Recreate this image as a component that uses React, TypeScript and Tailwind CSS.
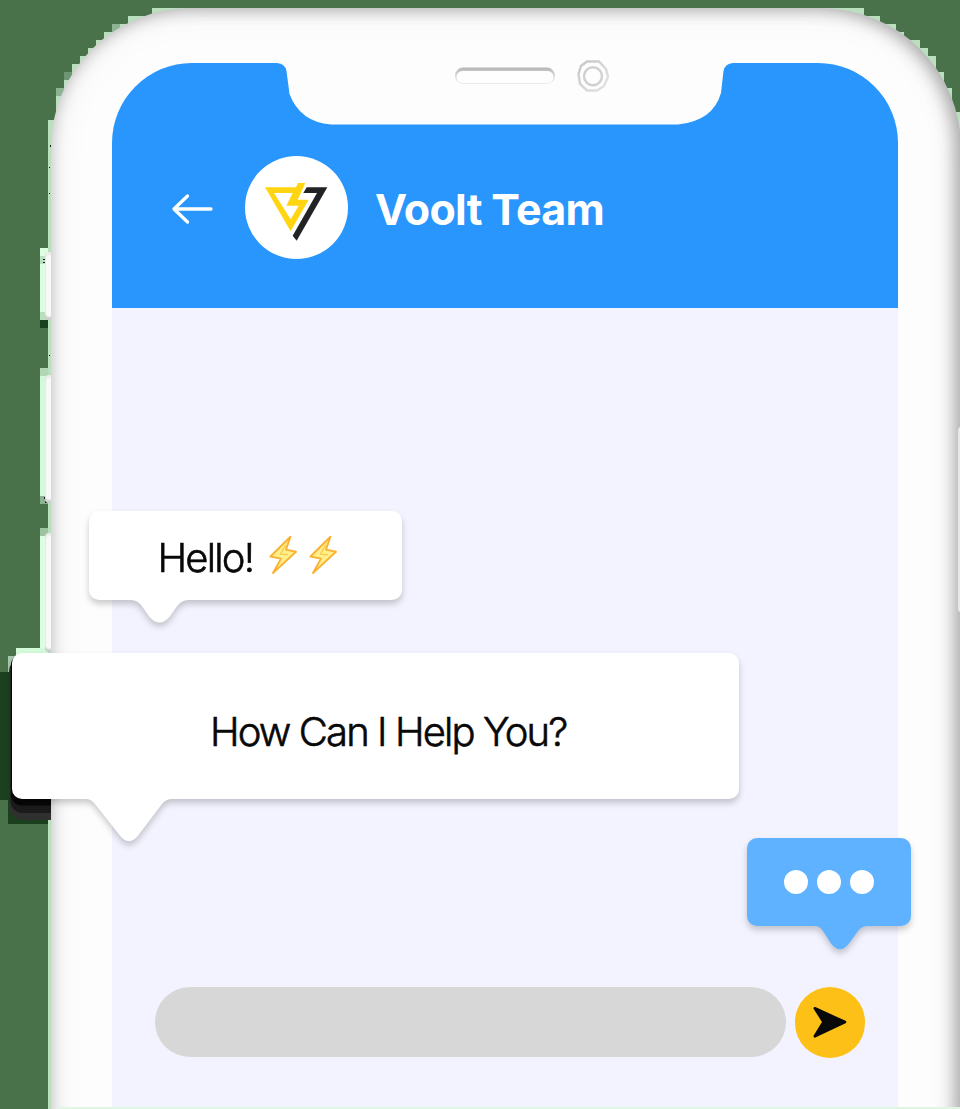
import React from "react";

type Block = [x: number, y: number, w: number, h: number, fill?: string];

const HALO = "#b9dfbd";
const EDGE: Block[] = [
  [152, 8, 712, 8], [128, 16, 752, 8], [120, 24, 776, 8], [112, 24, 8, 8, "#8db391"],
  [104, 32, 800, 8], [96, 40, 824, 8], [88, 48, 840, 8], [80, 56, 856, 8], [72, 64, 864, 8],
  [72, 72, 872, 8], [64, 72, 8, 8, "#6f9672"], [64, 80, 880, 8], [64, 88, 888, 8], [56, 88, 8, 8, "#8db391"],
  [56, 96, 896, 16], [56, 112, 904, 8], [48, 120, 912, 989],
  [40, 248, 8, 72, "#dcffe2"], [40, 256, 8, 8, "#b9dfbd"], [40, 312, 8, 8, "#b9dfbd"], [40, 320, 8, 8, "#1b401d"],
  [40, 368, 8, 8, "#b0d6b4"], [40, 376, 8, 120, "#d3fbd9"], [40, 496, 8, 8, "#8db391"],
  [40, 528, 8, 8, "#9bc49f"], [40, 536, 8, 120, "#dcffe2"],
  [16, 648, 32, 8, "#d3fbd9"], [8, 656, 16, 16, "#a9c8ad"],
  [0, 672, 16, 128, "#1b401d"], [8, 800, 40, 24, "#1b401d"],
];

const SPECKS: Block[] = [
  [43, 259, 2, 1], [43, 262, 2, 1], [49, 355, 1, 1], [44, 497, 1, 2], [45, 501, 2, 2],
  [52, 133, 1, 1], [50, 145, 1, 2], [49, 167, 1, 1], [49, 193, 1, 1], [58, 105, 1, 1], [57, 109, 1, 1],
];

function Backdrop() {
  return (
    <svg className="absolute inset-0" width="960" height="1109" shapeRendering="crispEdges" aria-hidden="true">
      {EDGE.map(([x, y, w, h, fill], i) => (
        <rect key={i} x={x} y={y} width={w} height={h} fill={fill ?? HALO} />
      ))}
      {SPECKS.map(([x, y, w, h], i) => (
        <rect key={i} x={x} y={y} width={w} height={h} fill="#1c1c1c" />
      ))}
      <g shapeRendering="auto">
        <rect x="9" y="658" width="60" height="162" rx="14" fill="#303030" />
        <rect x="10.5" y="656" width="60" height="157" rx="12" fill="#1b1b1b" />
        <rect x="11" y="654" width="60" height="151.5" rx="11" fill="#070707" />
      </g>
    </svg>
  );
}

function SideButton({ className }: { className: string }) {
  return (
    <div className={`absolute left-[45px] w-[8px] rounded-l-[4px] bg-[#f9f9f9] shadow-[inset_0_-3px_2px_rgba(0,0,0,0.18),inset_0_3px_2px_rgba(0,0,0,0.06)] ${className}`} />
  );
}

function Notch() {
  return (
    <div className="absolute left-[164px] top-[-7px]">
      <svg width="458" height="70" viewBox="276 56 458 70" aria-hidden="true">
        <path
          d="M276 56V63H277Q285 63.500 286.500 71L289.500 94Q300 122 331 124.500H678Q713 121 721 93L723.500 71Q725 63.500 733 63H734V56Z"
          fill="#fdfdfd"
        />
        <defs>
          <linearGradient id="slot" x1="0" y1="0" x2="0" y2="1">
            <stop offset="0" stopColor="#b5b5b5" />
            <stop offset="0.45" stopColor="#d5d5d5" />
            <stop offset="1" stopColor="#ececec" />
          </linearGradient>
          <linearGradient id="ring" x1="0" y1="0" x2="1" y2="1">
            <stop offset="0" stopColor="#c6c6c6" />
            <stop offset="1" stopColor="#e4e4e4" />
          </linearGradient>
        </defs>
        <rect x="455" y="67.5" width="100" height="16.500" rx="8.200" fill="url(#slot)" />
        <rect x="456.500" y="71" width="97" height="12" rx="6" fill="#fefefe" />
        <path d="M587 61.500H599L606 69L608 77L604 86L597 90.500H587L580 84L578.500 74L581 66Z" fill="#fdfdfd" stroke="url(#ring)" strokeWidth="2.400" />
        <circle cx="593" cy="76.300" r="9" fill="#fdfdfd" stroke="#d0d0d0" strokeWidth="2.400" />
      </svg>
    </div>
  );
}

function Header() {
  return (
    <header className="relative flex h-[245px] shrink-0 items-start rounded-t-[80px] bg-[#2896fc] pl-[59px] pt-[93px]">
      <Notch />
      <svg className="mt-[36px]" width="43" height="34" viewBox="0 0 43 34" fill="none" stroke="white" strokeWidth="3.300" strokeLinecap="round" strokeLinejoin="round" aria-label="Back">
        <path d="M40 17H3M16.500 4L3 17L16.500 30" />
      </svg>
      <div className="ml-[31px] size-[102.500px] rounded-full bg-white">
        <svg width="103" height="103" viewBox="256 48 309 309" aria-hidden="true">
          <path fillRule="evenodd" fill="#ffd512" d="M316 142H409L415 129H437L414 179H447L393 274ZM343 159L393 238L417 197H380L399 159Z" />
          <path fill="#222326" d="M441 142H503L411 302L399 287L472 159H431Z" />
        </svg>
      </div>
      <h1 className="ml-[27.500px] mt-[26px] whitespace-nowrap text-[43px] font-bold leading-[54px] tracking-[-0.700px] text-white">Voolt Team</h1>
    </header>
  );
}

function Bolt() {
  return (
    <svg width="28" height="40" viewBox="0 0 28 40" aria-hidden="true">
      <path d="M21.400 1.800L1.500 21.500L12 23.600L4 38L27 16.800L17 14.600Z" fill="#fff08c" stroke="#f9b233" strokeWidth="1.900" strokeLinejoin="round" />
      <path d="M16.500 10L11.500 19.200L19 19.600" fill="none" stroke="#fcc94a" strokeWidth="1.300" />
    </svg>
  );
}

export default function App() {
  return (
    <div className="relative h-[1109px] w-[960px] overflow-hidden bg-[#49724b] font-['Inter',sans-serif]">
      <Backdrop />
      <SideButton className="top-[252px] h-[68px]" />
      <SideButton className="top-[375px] h-[128px]" />
      <SideButton className="top-[533px] h-[119px]" />
      <main className="relative ml-[51px] mt-[8px] h-[1250px] w-[910px] rounded-[140px] bg-[#fdfdfd] pl-[61px] pt-[55px] shadow-[inset_0_0_18px_rgba(0,0,0,0.16),inset_0_0_42px_rgba(0,0,0,0.06),inset_-7px_0_18px_rgba(0,0,0,0.24)]">
        <div className="flex h-[1044px] w-[786px] flex-col rounded-t-[80px] bg-[#f3f3ff]">
          <Header />

          <div className="relative ml-[-23px] mt-[203px] flex h-[89px] w-[313px] shrink-0 items-start rounded-[10px] bg-white pl-[68.500px] pt-[22px] drop-shadow-[0_4px_3px_rgba(0,0,0,0.2)]">
            <p className="whitespace-nowrap text-[40px] font-light leading-[50px] tracking-[-1.800px] text-[#080808] [-webkit-text-stroke:0.6px_#080808]">Hello!</p>
            <span className="absolute left-[179.500px] top-[24px] flex gap-[12px]">
              <Bolt />
              <Bolt />
            </span>
            <svg className="absolute left-[42px] top-[88px]" width="60" height="26" viewBox="131.500 599 60 26" aria-hidden="true">
              <path d="M131.500 599V600Q138.500 600 143 607L150 617Q160 628 170 617L177 607Q181.500 600 189 600V599Z" fill="white" />
            </svg>
          </div>

          <div className="relative ml-[-100px] mt-[53px] flex h-[146px] w-[726.500px] shrink-0 items-start rounded-[10px] bg-white pl-[198px] pt-[54px] drop-shadow-[0_4px_3px_rgba(0,0,0,0.2)]">
            <p className="whitespace-nowrap text-[40px] font-light leading-[50px] tracking-[-1.900px] text-[#080808] [-webkit-text-stroke:0.6px_#080808]">How Can I Help You?</p>
            <svg className="absolute left-[74px] top-[145px]" width="88" height="46" viewBox="86 798 88 46" aria-hidden="true">
              <path d="M86 798V799Q91 799 95 804L119.500 835Q129 847.500 138.500 835L162 804Q166 799 172 799V798Z" fill="white" />
            </svg>
          </div>

          <div className="relative mr-[-13px] mt-[38.500px] flex h-[88.500px] w-[164px] shrink-0 items-center justify-center gap-[9.500px] self-end rounded-[10px] bg-[#5fb2ff] drop-shadow-[0_4px_3px_rgba(0,0,0,0.2)]">
            <i className="size-[23.500px] rounded-full bg-white" />
            <i className="size-[23.500px] rounded-full bg-white" />
            <i className="size-[23.500px] rounded-full bg-white" />
            <svg className="absolute left-[68px] top-[87px]" width="56" height="26" viewBox="815 925 56 26" aria-hidden="true">
              <path d="M815 925V926Q819.500 926 823 931L831 943.500Q840 955 849 943.500L858 931Q862 926 868 926V925Z" fill="#5fb2ff" />
            </svg>
          </div>

          <div className="ml-[43px] mt-[61px] flex h-[70px] shrink-0 gap-[9px]">
            <div className="h-[70px] w-[630.500px] rounded-full bg-[#d7d7d7]" />
            <button className="size-[70.500px] rounded-full bg-[#fdc016]" aria-label="Send">
              <svg width="70" height="70" viewBox="0 0 70 70" aria-hidden="true">
                <path d="M19.800 21.300L50 35L19.800 49.300L28.500 35Z" fill="#090909" stroke="#090909" strokeWidth="2.600" strokeLinejoin="round" />
              </svg>
            </button>
          </div>
        </div>
        <div className="absolute left-[907px] top-[419px] h-[185px] w-[3px] rounded-l bg-[#e9e9e9]" />
      </main>
      <div className="absolute left-[57px] top-[1107px] h-[2px] w-[903px] bg-[#e0f6e4]" />
    </div>
  );
}
